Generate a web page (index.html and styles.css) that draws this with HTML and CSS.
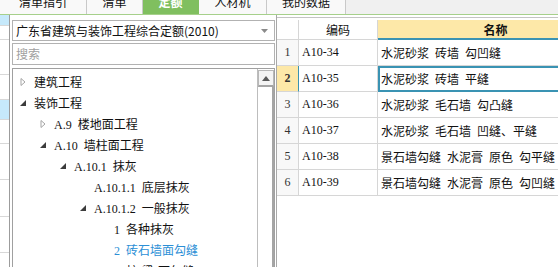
FILE: index.html
```html
<!DOCTYPE html>
<html>
<head>
    <meta charset="utf-8">
    <link rel="stylesheet" href="styles.css">
</head>
<body>
    <div class="app">
        <!-- Вкладки -->
        <div class="tabbar">
            <div class="tab tab-1">清单指引</div>
            <div class="tab tab-2">清单</div>
            <div class="tab tab-3 active">定额</div>
            <div class="tab tab-4">人材机</div>
            <div class="tab tab-5">我的数据</div>
        </div>

        <div class="main">
            <!-- Край соседней таблицы -->
            <div class="strip">
                <div class="strip-cell blue h11"></div>
                <div class="strip-cell h14"></div>
                <div class="strip-cell h35"></div>
                <div class="strip-cell h25"></div>
                <div class="strip-cell blue h20"></div>
                <div class="strip-cell h24"></div>
                <div class="strip-cell h36"></div>
                <div class="strip-cell h37"></div>
                <div class="strip-cell h36"></div>
            </div>

            <!-- Левая панель: справочник -->
            <div class="left-pane">
                <div class="select">
                    <span>广东省建筑与装饰工程综合定额(2010)</span>
                    <svg class="caret" width="7" height="4" viewBox="0 0 7 4"><path d="M0 0 L7 0 L3.5 4 Z" fill="#8a8a8a"/></svg>
                </div>
                <div class="search">搜索</div>

                <div class="tree">
                    <div class="tree-list">
                        <div class="tree-item lv0">
                            <svg class="tw" width="10" height="10" viewBox="0 0 10 10"><path d="M3 1.5 L7 5 L3 8.5 Z" fill="none" stroke="#a5a5a5"/></svg>
                            <span>建筑工程</span>
                        </div>
                        <div class="tree-item lv0">
                            <svg class="tw" width="10" height="10" viewBox="0 0 10 10"><path d="M8 2 L8 8 L2 8 Z" fill="#3c3c3c"/></svg>
                            <span>装饰工程</span>
                        </div>
                        <div class="tree-item lv1">
                            <svg class="tw" width="10" height="10" viewBox="0 0 10 10"><path d="M3 1.5 L7 5 L3 8.5 Z" fill="none" stroke="#a5a5a5"/></svg>
                            <span>A.9 楼地面工程</span>
                        </div>
                        <div class="tree-item lv1">
                            <svg class="tw" width="10" height="10" viewBox="0 0 10 10"><path d="M8 2 L8 8 L2 8 Z" fill="#3c3c3c"/></svg>
                            <span>A.10 墙柱面工程</span>
                        </div>
                        <div class="tree-item lv2">
                            <svg class="tw" width="10" height="10" viewBox="0 0 10 10"><path d="M8 2 L8 8 L2 8 Z" fill="#3c3c3c"/></svg>
                            <span>A.10.1 抹灰</span>
                        </div>
                        <div class="tree-item lv3">
                            <span class="tw"></span>
                            <span>A.10.1.1 底层抹灰</span>
                        </div>
                        <div class="tree-item lv3">
                            <svg class="tw" width="10" height="10" viewBox="0 0 10 10"><path d="M8 2 L8 8 L2 8 Z" fill="#3c3c3c"/></svg>
                            <span>A.10.1.2 一般抹灰</span>
                        </div>
                        <div class="tree-item lv4">
                            <span class="tw"></span>
                            <span>1 各种抹灰</span>
                        </div>
                        <div class="tree-item lv4 current">
                            <span class="tw"></span>
                            <span>2 砖石墙面勾缝</span>
                        </div>
                        <div class="tree-item lv4">
                            <span class="tw"></span>
                            <span>3 柱(梁)面勾缝</span>
                        </div>
                    </div>
                    <div class="vscroll">
                        <div class="vs-btn">
                            <svg width="8" height="5" viewBox="0 0 8 5"><path d="M0 5 L4 0 L8 5 Z" fill="#5a5a5a"/></svg>
                        </div>
                        <div class="vs-thumb"></div>
                    </div>
                </div>
            </div>

            <!-- Правая панель: список расценок -->
            <div class="right-pane">
                <div class="grid">
                    <div class="row head">
                        <div class="cell c-num"></div>
                        <div class="cell c-code center">编码</div>
                        <div class="cell c-name center">名称</div>
                    </div>
                    <div class="row">
                        <div class="cell c-num center">1</div>
                        <div class="cell c-code">A10-34</div>
                        <div class="cell c-name">水泥砂浆 砖墙 勾凹缝</div>
                    </div>
                    <div class="row selected">
                        <div class="cell c-num center">2</div>
                        <div class="cell c-code">A10-35</div>
                        <div class="cell c-name">水泥砂浆 砖墙 平缝</div>
                    </div>
                    <div class="row">
                        <div class="cell c-num center">3</div>
                        <div class="cell c-code">A10-36</div>
                        <div class="cell c-name">水泥砂浆 毛石墙 勾凸缝</div>
                    </div>
                    <div class="row">
                        <div class="cell c-num center">4</div>
                        <div class="cell c-code">A10-37</div>
                        <div class="cell c-name">水泥砂浆 毛石墙 凹缝、平缝</div>
                    </div>
                    <div class="row">
                        <div class="cell c-num center">5</div>
                        <div class="cell c-code">A10-38</div>
                        <div class="cell c-name">景石墙勾缝 水泥膏 原色 勾平缝</div>
                    </div>
                    <div class="row">
                        <div class="cell c-num center">6</div>
                        <div class="cell c-code">A10-39</div>
                        <div class="cell c-name">景石墙勾缝 水泥膏 原色 勾凹缝</div>
                    </div>
                </div>
            </div>
        </div>
    </div>
</body>
</html>
```

FILE: styles.css
```css
* {
    margin: 0;
    padding: 0;
    box-sizing: border-box;
}

body {
    width: 558px;
    height: 267px;
    overflow: hidden;
    background: #ffffff;
    color: #111111;
    font-family: "Liberation Serif", "Noto Sans CJK SC", serif;
    font-size: 12px;
    word-spacing: 3px;
}

.app {
    display: flex;
    flex-direction: column;
    height: 267px;
}

/* Вкладки */
.tabbar {
    display: flex;
    height: 15px;
    flex: none;
    background: #f0f0f0;
    border-bottom: 1px solid #a6d08b;
}

.tab {
    height: 14px;
    background: #f9f9f9;
    border-right: 1px solid #c9c9c9;
    text-align: center;
    font-family: "Noto Sans CJK SC", sans-serif;
    font-size: 12px;
    line-height: 4px;
}

.tab-1 { width: 87px; }
.tab-2 { width: 56px; }
.tab-3 { width: 56px; }
.tab-4 { width: 68px; }
.tab-5 { width: 79px; }

.tab.active {
    background: #80bf5f;
    border-right-color: #80bf5f;
    color: #ffffff;
    font-weight: 700;
}

.main {
    display: flex;
    flex: 1;
    min-height: 0;
}

/* Полоса слева */
.strip {
    width: 10px;
    flex: none;
    border-right: 1px solid #9c9c9c;
}

.strip-cell {
    border-bottom: 1px solid #d8d8d8;
}

.strip-cell.blue {
    background: #c6e9fb;
}

.h11 { height: 11px; }
.h14 { height: 14px; }
.h20 { height: 20px; }
.h24 { height: 24px; }
.h25 { height: 25px; }
.h35 { height: 35px; }
.h36 { height: 36px; }
.h37 { height: 37px; }

/* Левая панель */
.left-pane {
    width: 266px;
    flex: none;
    display: flex;
    flex-direction: column;
    padding: 5px 1px 0 2px;
}

.select {
    height: 21px;
    border: 1px solid #b2b2b2;
    display: flex;
    align-items: center;
    justify-content: space-between;
    padding: 0 6px 0 3px;
    margin-bottom: 2px;
    font-family: "Noto Sans CJK SC", sans-serif;
    word-spacing: 0;
}

.search {
    height: 22px;
    border: 1px solid #b2b2b2;
    padding-left: 3px;
    line-height: 20px;
    color: #a0a0a0;
    margin-bottom: 3px;
    font-family: "Noto Sans CJK SC", sans-serif;
}

.tree {
    flex: 1;
    display: flex;
    border: 1px solid #a0a0a0;
    border-bottom: none;
    min-height: 0;
}

.tree-list {
    flex: 1;
    padding-top: 2px;
    overflow: hidden;
}

.tree-item {
    height: 21px;
    display: flex;
    align-items: center;
    white-space: nowrap;
}

.tree-item .tw {
    width: 10px;
    height: 10px;
    margin-right: 6px;
    flex: none;
}

.lv0 { padding-left: 5px; }
.lv1 { padding-left: 25px; }
.lv2 { padding-left: 45px; }
.lv3 { padding-left: 65px; }
.lv4 { padding-left: 85px; }

.tree-item.current {
    color: #2c8fd6;
}

.vscroll {
    width: 17px;
    flex: none;
    display: flex;
    flex-direction: column;
    border-left: 1px solid #bdbdbd;
    padding: 1px 0 0 0;
}

.vs-btn {
    height: 17px;
    background: #f4f4f4;
    border: 1px solid #b8b8b8;
    border-bottom: 2px solid #a5a5a5;
    display: flex;
    align-items: center;
    justify-content: center;
}

.vs-thumb {
    flex: 1;
    background: #ffffff;
    border-right: 2px solid #a5a5a5;
}

/* Правая панель */
.right-pane {
    flex: 1;
    border-left: 1px solid #a8a8a8;
    padding-top: 2px;
    min-width: 0;
    overflow: hidden;
}

.grid {
    border-top: 1px solid #c4c4c4;
    padding-top: 2px;
}

.row {
    display: flex;
    height: 26px;
}

.row.head {
    height: 20px;
}

.cell {
    display: flex;
    align-items: center;
    padding-left: 3px;
    border-right: 1px solid #d6d6d6;
    border-bottom: 1px solid #d6d6d6;
    white-space: nowrap;
    flex: none;
}

.cell.center {
    justify-content: center;
    padding-left: 0;
}

.c-num {
    width: 22px;
    background: #f8f8f8;
    color: #333333;
}

.c-code {
    width: 79px;
}

.c-name {
    width: 236px;
}

.head .c-num,
.head .c-code {
    background: #ffffff;
}

.head .c-name {
    background: #fde8a8;
    border-bottom: 2px solid #3a93b3;
    font-weight: 700;
}

.head .c-code,
.head .c-name {
    font-family: "Noto Sans CJK SC", sans-serif;
}

.selected .c-num {
    background: #fde8a8;
    font-weight: 700;
    border-right-color: #3a93b3;
}

.selected .c-name {
    outline: 2px solid #3a93b3;
    outline-offset: -2px;
}
```
